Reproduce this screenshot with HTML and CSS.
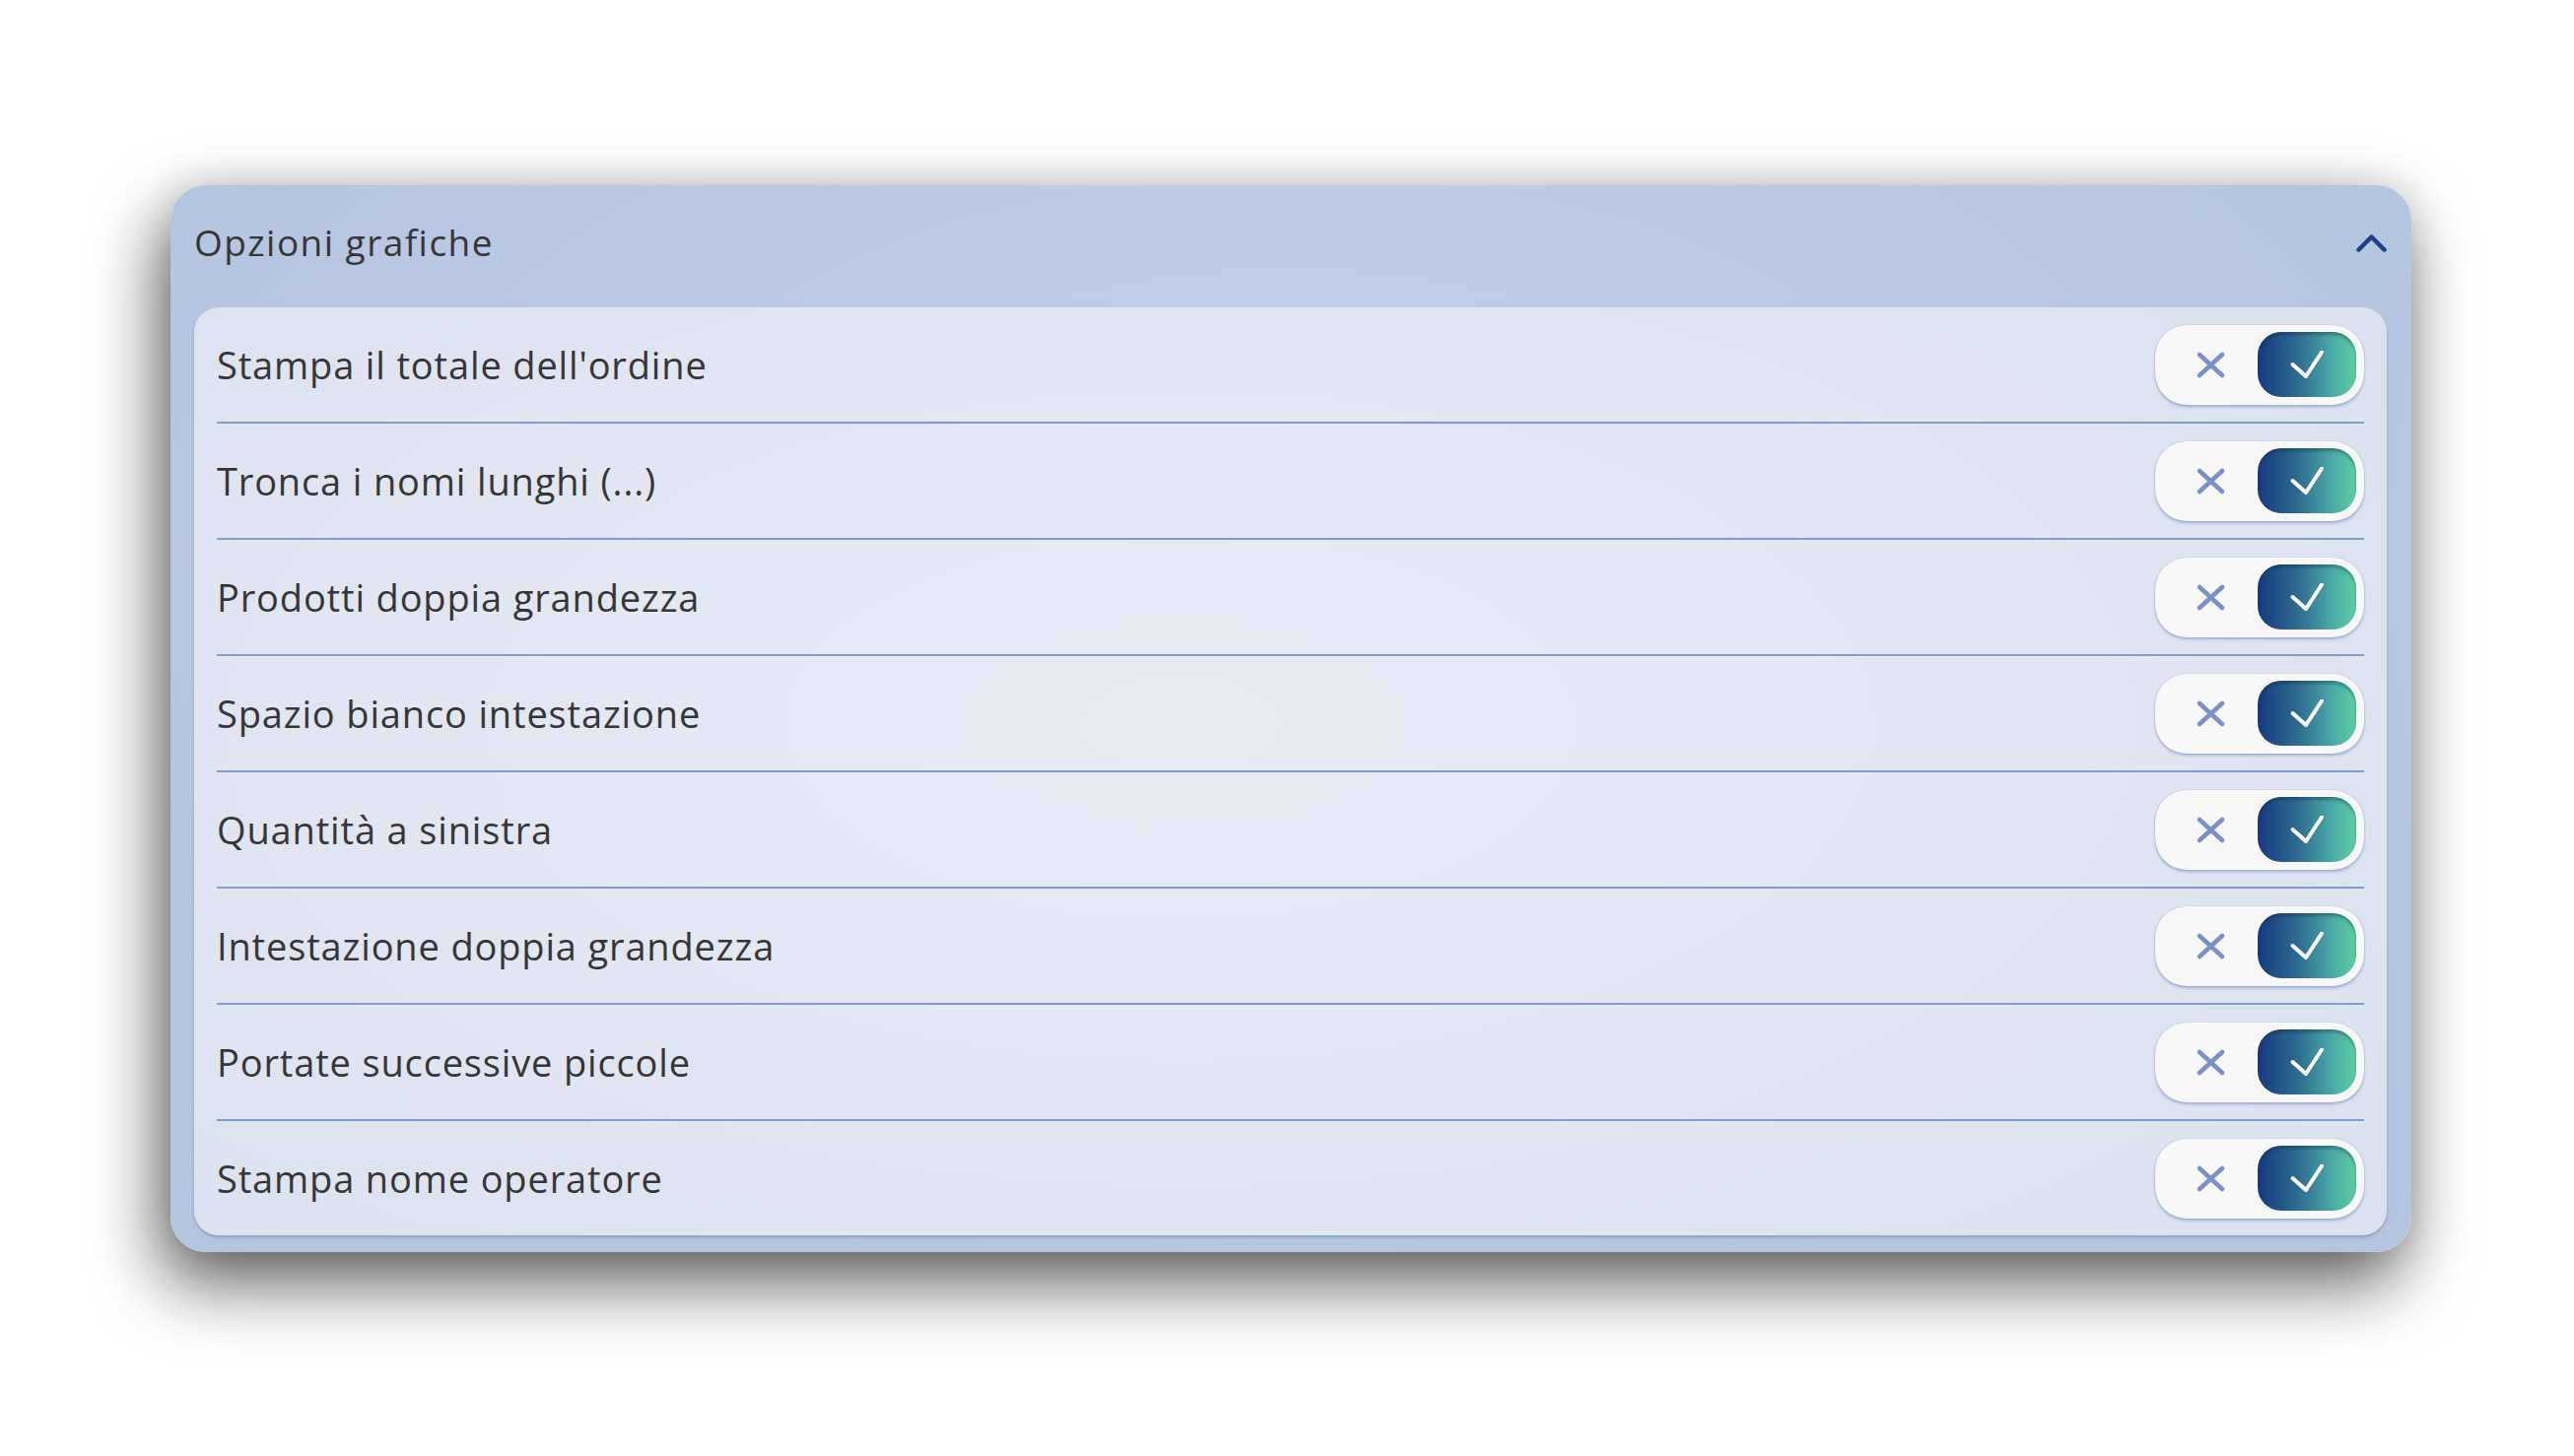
FILE: index.html
```html
<!DOCTYPE html>
<html lang="it">
<head>
<meta charset="utf-8">
<title>Opzioni grafiche</title>
<link rel="stylesheet" href="styles.css">
</head>
<body>
<main class="stage">
<section class="card">
  <header class="card-header">
    <h2 class="card-title">Opzioni grafiche</h2>
    <svg class="chevron" width="31" height="18" viewBox="0 0 31 18"><polyline points="2.5,15.5 15.5,2.5 28.5,15.5" fill="none" stroke="#1c4189" stroke-width="4.5" stroke-linecap="round" stroke-linejoin="round"/></svg>
  </header>
  <div class="panel">
    <div class="row"><span class="label">Stampa il totale dell'ordine</span>
      <div class="toggle"><svg class="x" width="29" height="27" viewBox="0 0 29 27"><path d="M3 3 L26 24 M26 3 L3 24" stroke="#7b90c6" stroke-width="4.5" stroke-linecap="round"/></svg><span class="knob"><svg width="34" height="28" viewBox="0 0 34 28"><polyline points="2.5,14 16,26 32,1.5" fill="none" stroke="#fff" stroke-width="4" stroke-linecap="round" stroke-linejoin="round"/></svg></span></div></div>
    <div class="row"><span class="label">Tronca i nomi lunghi (...)</span>
      <div class="toggle"><svg class="x" width="29" height="27" viewBox="0 0 29 27"><path d="M3 3 L26 24 M26 3 L3 24" stroke="#7b90c6" stroke-width="4.5" stroke-linecap="round"/></svg><span class="knob"><svg width="34" height="28" viewBox="0 0 34 28"><polyline points="2.5,14 16,26 32,1.5" fill="none" stroke="#fff" stroke-width="4" stroke-linecap="round" stroke-linejoin="round"/></svg></span></div></div>
    <div class="row"><span class="label">Prodotti doppia grandezza</span>
      <div class="toggle"><svg class="x" width="29" height="27" viewBox="0 0 29 27"><path d="M3 3 L26 24 M26 3 L3 24" stroke="#7b90c6" stroke-width="4.5" stroke-linecap="round"/></svg><span class="knob"><svg width="34" height="28" viewBox="0 0 34 28"><polyline points="2.5,14 16,26 32,1.5" fill="none" stroke="#fff" stroke-width="4" stroke-linecap="round" stroke-linejoin="round"/></svg></span></div></div>
    <div class="row"><span class="label">Spazio bianco intestazione</span>
      <div class="toggle"><svg class="x" width="29" height="27" viewBox="0 0 29 27"><path d="M3 3 L26 24 M26 3 L3 24" stroke="#7b90c6" stroke-width="4.5" stroke-linecap="round"/></svg><span class="knob"><svg width="34" height="28" viewBox="0 0 34 28"><polyline points="2.5,14 16,26 32,1.5" fill="none" stroke="#fff" stroke-width="4" stroke-linecap="round" stroke-linejoin="round"/></svg></span></div></div>
    <div class="row"><span class="label">Quantità a sinistra</span>
      <div class="toggle"><svg class="x" width="29" height="27" viewBox="0 0 29 27"><path d="M3 3 L26 24 M26 3 L3 24" stroke="#7b90c6" stroke-width="4.5" stroke-linecap="round"/></svg><span class="knob"><svg width="34" height="28" viewBox="0 0 34 28"><polyline points="2.5,14 16,26 32,1.5" fill="none" stroke="#fff" stroke-width="4" stroke-linecap="round" stroke-linejoin="round"/></svg></span></div></div>
    <div class="row"><span class="label">Intestazione doppia grandezza</span>
      <div class="toggle"><svg class="x" width="29" height="27" viewBox="0 0 29 27"><path d="M3 3 L26 24 M26 3 L3 24" stroke="#7b90c6" stroke-width="4.5" stroke-linecap="round"/></svg><span class="knob"><svg width="34" height="28" viewBox="0 0 34 28"><polyline points="2.5,14 16,26 32,1.5" fill="none" stroke="#fff" stroke-width="4" stroke-linecap="round" stroke-linejoin="round"/></svg></span></div></div>
    <div class="row"><span class="label">Portate successive piccole</span>
      <div class="toggle"><svg class="x" width="29" height="27" viewBox="0 0 29 27"><path d="M3 3 L26 24 M26 3 L3 24" stroke="#7b90c6" stroke-width="4.5" stroke-linecap="round"/></svg><span class="knob"><svg width="34" height="28" viewBox="0 0 34 28"><polyline points="2.5,14 16,26 32,1.5" fill="none" stroke="#fff" stroke-width="4" stroke-linecap="round" stroke-linejoin="round"/></svg></span></div></div>
    <div class="row"><span class="label">Stampa nome operatore</span>
      <div class="toggle"><svg class="x" width="29" height="27" viewBox="0 0 29 27"><path d="M3 3 L26 24 M26 3 L3 24" stroke="#7b90c6" stroke-width="4.5" stroke-linecap="round"/></svg><span class="knob"><svg width="34" height="28" viewBox="0 0 34 28"><polyline points="2.5,14 16,26 32,1.5" fill="none" stroke="#fff" stroke-width="4" stroke-linecap="round" stroke-linejoin="round"/></svg></span></div></div>
  </div>
</section>
</main>
</body>
</html>
```
FILE: styles.css
```css
html, body {
  margin: 0;
  padding: 0;
  background: #ffffff;
  height: 100%;
}
body {
  font-family: "Open Sans", "Noto Sans", sans-serif;
  color: #363638;
}
.stage {
  box-sizing: border-box;
  min-height: 100vh;
  padding: 188px 0 0 173px;
}
.card {
  width: 2274px;
  box-sizing: border-box;
  padding: 0 25px 17px 24px;
  border-radius: 36px;
  background: radial-gradient(ellipse 60% 70% at 50% 35%, #c5d2ea 0%, #b4c5e0 100%);
  box-shadow: -10px 32px 70px rgba(0, 0, 0, 0.62), 0 -4px 40px rgba(0, 0, 0, 0.12);
}
.card-header {
  height: 124px;
  box-sizing: border-box;
  padding-bottom: 10px;
  display: flex;
  align-items: center;
  justify-content: space-between;
}
.card-title {
  margin: 0;
  font-size: 37px;
  font-weight: 400;
  letter-spacing: 1.45px;
  color: #363638;
}
.chevron {
  display: block;
  margin-top: 4px;
}
.panel {
  border-radius: 25px;
  background: radial-gradient(ellipse 70% 80% at 45% 45%, #e8ecf5 0%, #dbe1ee 100%);
  box-shadow: 0 2px 3px rgba(60, 80, 130, 0.35);
}
.row {
  margin: 0 23px;
  height: 118px;
  box-sizing: border-box;
  border-bottom: 2px solid #7f9dd1;
  display: flex;
  align-items: center;
  justify-content: space-between;
}
.row:last-child {
  border-bottom: none;
  height: 116px;
}
.label {
  font-size: 38px;
  letter-spacing: 0.85px;
  color: #363638;
}
.toggle {
  width: 212px;
  height: 81px;
  box-sizing: border-box;
  border-radius: 32px;
  background: #f8f8f9;
  box-shadow: 0 2px 3px rgba(80, 110, 180, 0.45), 0 0 1px rgba(80, 110, 180, 0.5);
  display: flex;
  align-items: center;
  justify-content: space-between;
  padding: 0 8px 0 42px;
}
.x {
  display: block;
}
.knob {
  width: 100px;
  height: 66px;
  border-radius: 24px;
  background: linear-gradient(90deg, #163a7f 0%, #2d6a8e 40%, #4aa8a6 75%, #5dcfa2 100%);
  box-shadow: inset 0 3px 3px rgba(10, 40, 60, 0.35);
  display: flex;
  align-items: center;
  justify-content: center;
}
.knob svg {
  display: block;
}
```
